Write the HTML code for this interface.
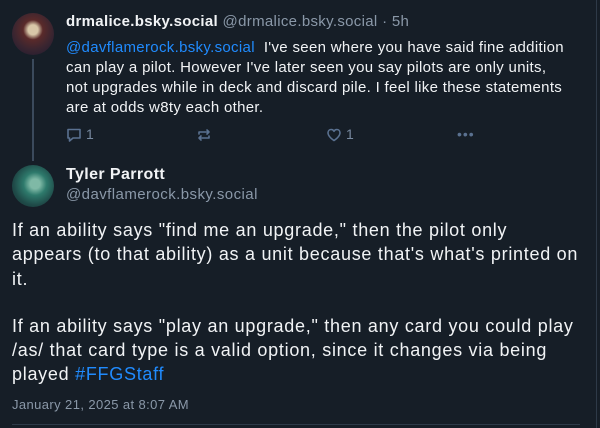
<!DOCTYPE html>
<html><head><meta charset="utf-8"><style>
*{margin:0;padding:0;box-sizing:border-box}
body{width:600px;height:428px;background:#161e27;font-family:"Liberation Sans",sans-serif;color:#f1f3f5;position:relative;overflow:hidden}
.abs{position:absolute;white-space:nowrap}
.rb{position:absolute;left:596px;top:0;width:1px;height:428px;background:#2e3a48}
.av{position:absolute;width:42px;height:42px;border-radius:50%}
.m{color:#8a98a8}
.l{color:#208bfe}
.t1{font-size:15px;line-height:20px;letter-spacing:0.32px}
.t2{font-size:18px;line-height:24.5px;letter-spacing:0.72px}
</style></head><body>
<div class="rb"></div>
<div class="av" style="left:12px;top:13px;background:radial-gradient(circle at 50% 40%,#d8c7a8 0 15%,#5a2a2a 30%,#3a2530 60%,#1c1a30 100%)"></div>
<div style="position:absolute;left:32px;top:59px;width:2px;height:102px;background:#3b4a5c"></div>
<div class="abs t1" style="left:66px;top:12px"><b>drmalice.bsky.social</b> <span class="m">@drmalice.bsky.social · 5h</span></div>
<div class="abs t1" style="left:66px;top:38px"><span class="l">@davflamerock.bsky.social</span>&nbsp; I've seen where you have said fine addition</div>
<div class="abs t1" style="left:66px;top:58px">can play a pilot. However I've later seen you say pilots are only units,</div>
<div class="abs t1" style="left:66px;top:78px">not upgrades while in deck and discard pile. I feel like these statements</div>
<div class="abs t1" style="left:66px;top:98px">are at odds w8ty each other.</div>
<svg class="abs" style="left:66px;top:127px" width="16" height="16" viewBox="0 0 16 16" fill="none" stroke="#5a7190" stroke-width="1.6"><path d="M2 2.5h12v8.5H7l-3.5 3v-3H2z" stroke-linejoin="round"/></svg>
<div class="abs m" style="left:86px;top:126px;font-size:14px;color:#788aa0">1</div>
<svg class="abs" style="left:196px;top:127px" width="16" height="16" viewBox="0 0 16 16" fill="none" stroke="#5a7190" stroke-width="1.6" stroke-linecap="round" stroke-linejoin="round"><path d="M3 7V5h10M11 3l2 2-2 2M13 9v2H3M5 13l-2-2 2-2"/></svg>
<svg class="abs" style="left:326px;top:127px" width="16" height="16" viewBox="0 0 16 16" fill="none" stroke="#5a7190" stroke-width="1.6"><path d="M8 13.5S2 10 2 5.8C2 3.8 3.5 2.5 5.2 2.5 6.5 2.5 7.5 3.3 8 4.3 8.5 3.3 9.5 2.5 10.8 2.5 12.5 2.5 14 3.8 14 5.8 14 10 8 13.5 8 13.5z" stroke-linejoin="round"/></svg>
<div class="abs m" style="left:346px;top:126px;font-size:14px;color:#788aa0">1</div>
<div class="abs" style="left:457px;top:126px;font-size:14px;color:#5a7190;letter-spacing:1px">•••</div>
<div class="av" style="left:12px;top:165px;background:radial-gradient(circle at 55% 45%,#7fb9a6 0 15%,#2e7a6c 35%,#1f4a48 65%,#15302f 100%)"></div>
<div class="abs" style="left:66px;top:166px;font-size:16px;font-weight:bold;letter-spacing:0.4px">Tyler Parrott</div>
<div class="abs m" style="left:66px;top:186px;font-size:15px;letter-spacing:0.44px">@davflamerock.bsky.social</div>
<div class="abs t2" style="left:12px;top:218px">If an ability says "find me an upgrade," then the pilot only</div>
<div class="abs t2" style="left:12px;top:242px">appears (to that ability) as a unit because that's what's printed on</div>
<div class="abs t2" style="left:12px;top:267px">it.</div>
<div class="abs t2" style="left:12px;top:314px">If an ability says "play an upgrade," then any card you could play</div>
<div class="abs t2" style="left:12px;top:338px">/as/ that card type is a valid option, since it changes via being</div>
<div class="abs t2" style="left:12px;top:362px">played <span class="l">#FFGStaff</span></div>
<div class="abs m" style="left:12px;top:397px;font-size:13px;letter-spacing:0.4px">January 21, 2025 at 8:07 AM</div>
<div style="position:absolute;left:12px;top:424px;width:568px;height:1px;background:#2e3a48"></div>
</body></html>
